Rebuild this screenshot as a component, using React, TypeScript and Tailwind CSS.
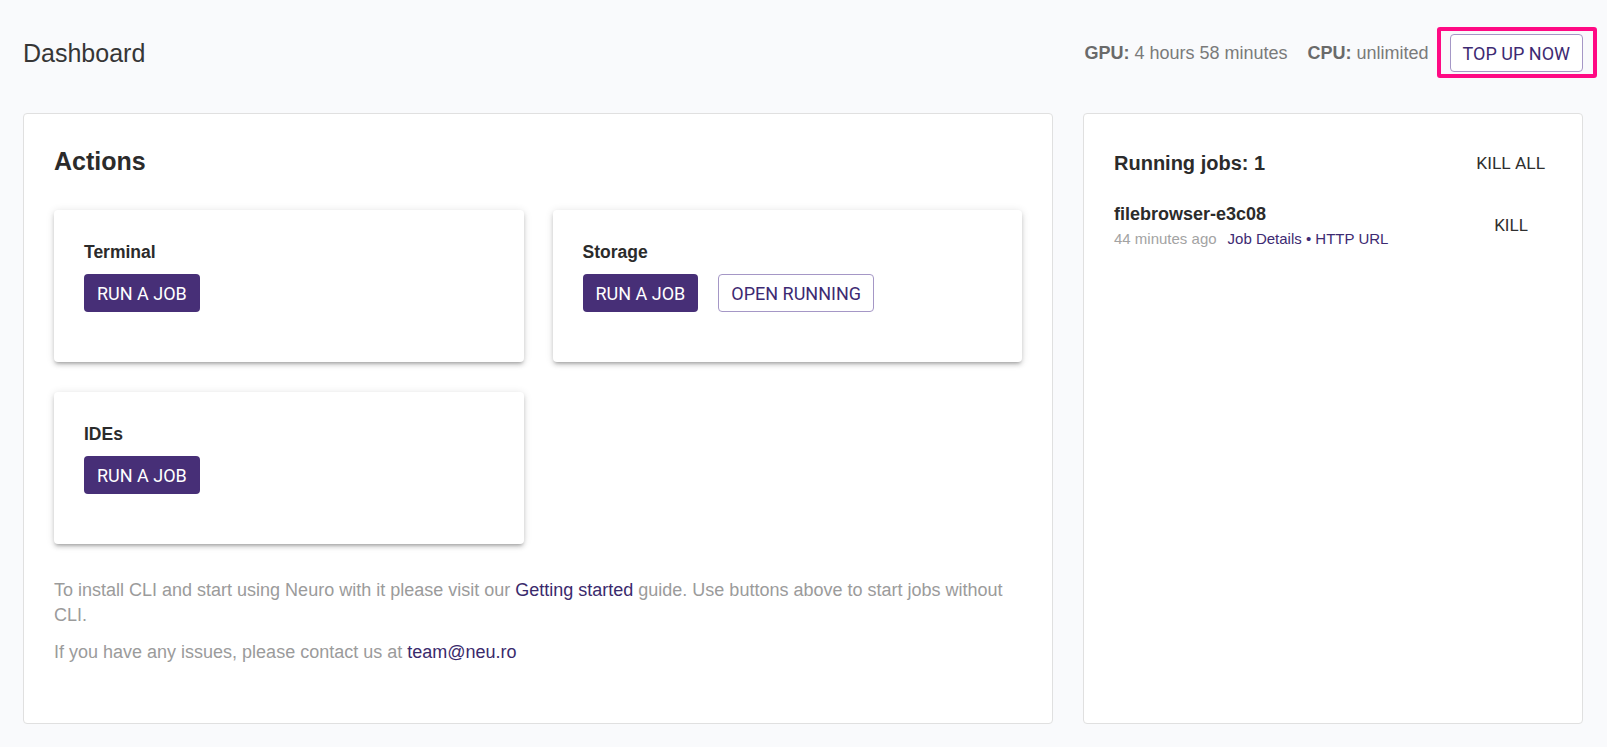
import React from 'react';

const sans = "font-['Liberation_Sans',Arial,sans-serif]";
const btnFont = "font-['Roboto','Liberation_Sans',sans-serif]";

interface ActionCardProps {
  title: string;
  openRunning?: boolean;
}

const ActionCard: React.FC<ActionCardProps> = ({ title, openRunning }) => (
  <div className="bg-white rounded-[4px] pt-[30px] px-[30px] pb-[50px] shadow-[0px_3px_3px_-2px_rgba(0,0,0,0.2),0px_3px_4px_0px_rgba(0,0,0,0.14),0px_1px_8px_0px_rgba(0,0,0,0.12)]">
    <h3 className="text-[17.5px] leading-[24px] font-bold text-[#2b2b2b] mb-[10px]">{title}</h3>
    <div className="flex gap-5">
      <button className={`${btnFont} h-[38px] px-[13px] rounded-[4px] bg-[#472f77] text-white text-[18px] uppercase`}>
        Run a job
      </button>
      {openRunning && (
        <button className={`${btnFont} h-[38px] px-[12px] rounded-[4px] border border-[#a597c6] bg-white text-[#3d2a72] text-[18px] uppercase`}>
          Open running
        </button>
      )}
    </div>
  </div>
);

export default function App() {
  return (
    <div className={`${sans} min-h-screen h-screen bg-[#f9fafc] flex flex-col pl-[23px] pr-[24px] pb-[23px]`}>
      {/* header */}
      <header className="flex items-center justify-between pt-[34px] pb-[41px]">
        <h1 className="text-[25px] leading-[32px] text-[#363636]">Dashboard</h1>
        <div className="flex items-center text-[18px] text-[#7a7a7a]">
          <span className="mr-5">
            <b className="text-[#6a6a6a]">GPU:</b> 4 hours 58 minutes
          </span>
          <span className="mr-[21px]">
            <b className="text-[#6a6a6a]">CPU:</b> unlimited
          </span>
          <div className="relative">
            <button className={`${btnFont} h-[38px] px-[12px] rounded-[4px] border border-[#a597c6] bg-white text-[#3d2a72] text-[18px] uppercase`}>
              Top up now
            </button>
            <div className="absolute -left-[13px] -right-[14px] -top-[7px] -bottom-[6px] border-4 border-[#ff0a84] rounded-[3px] pointer-events-none" />
          </div>
        </div>
      </header>

      <div className="flex-1 flex gap-[30px] min-h-0">
        {/* actions */}
        <section className="flex-1 bg-white border border-[#e0e0e0] rounded-[4px] pt-[31px] px-[30px]">
          <h2 className="text-[25px] leading-[32px] font-bold text-[#2b2b2b] mb-[33px]">Actions</h2>
          <div className="grid grid-cols-2 gap-x-[29px] gap-y-[30px]">
            <ActionCard title="Terminal" />
            <ActionCard title="Storage" openRunning />
            <ActionCard title="IDEs" />
          </div>
          <div className="mt-[34px] text-[18px] leading-[24.75px] text-[#9b9b9b]">
            <p>
              To install CLI and start using Neuro with it please visit our{' '}
              <a className="text-[#3a2a6c]">Getting started</a> guide. Use buttons above to start jobs without CLI.
            </p>
            <p className="mt-[12px]">
              If you have any issues, please contact us at <a className="text-[#3a2a6c]">team@neu.ro</a>
            </p>
          </div>
        </section>

        {/* running jobs */}
        <section className="w-[500px] bg-white border border-[#e0e0e0] rounded-[4px] pt-[30px] pl-[30px] pr-[29px]">
          <div className="flex items-center justify-between h-[38px]">
            <h2 className="text-[20px] font-bold text-[#2b2b2b]">Running jobs: 1</h2>
            <button className={`${btnFont} h-[38px] px-2 text-[17.4px] text-[#2f2f2f] uppercase`}>Kill all</button>
          </div>
          <div className="flex items-center justify-between mt-[20px]">
            <div>
              <div className="text-[18px] leading-[24px] font-bold text-[#2b2b2b]">filebrowser-e3c08</div>
              <div className="mt-[3px] leading-[20px]">
                <span className="text-[15px] text-[#a3a3a3]">44 minutes ago</span>
                <span className="ml-[11px] text-[15px] text-[#3d2a72]">Job Details • HTTP URL</span>
              </div>
            </div>
            <button className={`${btnFont} h-[38px] w-[84px] text-[17px] text-[#2f2f2f] uppercase`}>Kill</button>
          </div>
        </section>
      </div>
    </div>
  );
}
